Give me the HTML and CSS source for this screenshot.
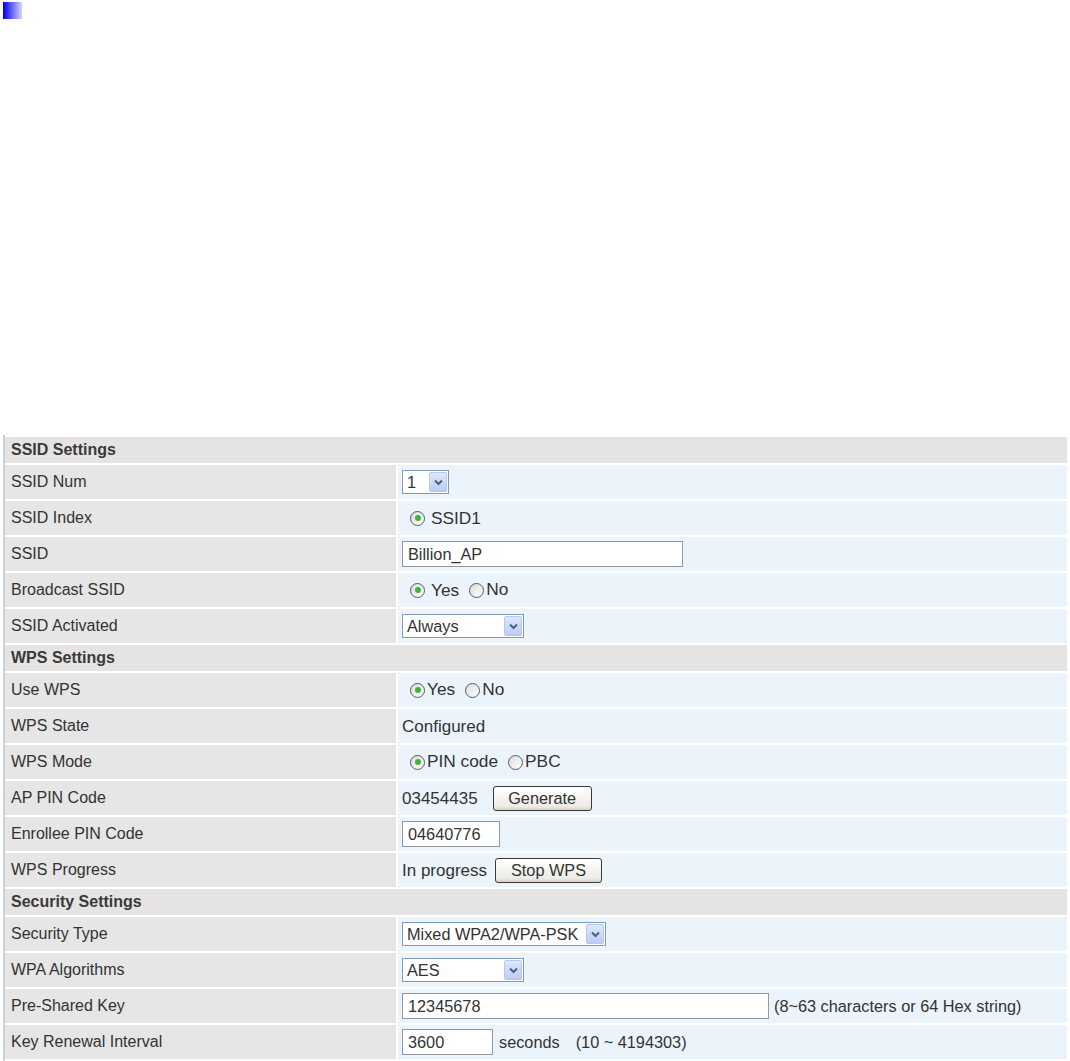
FILE: index.html
```html
<!DOCTYPE html>
<html lang="en">
<head>
    <meta charset="UTF-8">
    <title>Wireless Security</title>
    <link rel="stylesheet" href="styles.css">
</head>
<body>
    <div class="titleMark"></div>
    <div class="formWrap">
        <table class="setTable">
            <tr class="headRow"><td colspan="2">SSID Settings</td></tr>
            <tr>
                <td class="label">SSID Num</td>
                <td class="value">
                    <span class="fakeSelect selNum"><span class="selText">1</span><span class="selArrow"><svg width="9" height="7" viewBox="0 0 9 7"><path d="M1 1.5 L4.5 5 L8 1.5" fill="none" stroke="#4d6185" stroke-width="2"/></svg></span></span>
                </td>
            </tr>
            <tr>
                <td class="label">SSID Index</td>
                <td class="value"><span class="radio on"></span><span class="radioText wideGap">SSID1</span></td>
            </tr>
            <tr>
                <td class="label">SSID</td>
                <td class="value"><span class="textBox boxSsid">Billion_AP</span></td>
            </tr>
            <tr>
                <td class="label">Broadcast SSID</td>
                <td class="value"><span class="radio on"></span><span class="radioText wideGap">Yes</span><span class="radio next"></span><span class="radioText">No</span></td>
            </tr>
            <tr>
                <td class="label">SSID Activated</td>
                <td class="value">
                    <span class="fakeSelect selWide"><span class="selText">Always</span><span class="selArrow"><svg width="9" height="7" viewBox="0 0 9 7"><path d="M1 1.5 L4.5 5 L8 1.5" fill="none" stroke="#4d6185" stroke-width="2"/></svg></span></span>
                </td>
            </tr>
            <tr class="headRow"><td colspan="2">WPS Settings</td></tr>
            <tr>
                <td class="label">Use WPS</td>
                <td class="value"><span class="radio on"></span><span class="radioText">Yes</span><span class="radio next"></span><span class="radioText">No</span></td>
            </tr>
            <tr>
                <td class="label">WPS State</td>
                <td class="value"><span class="plain">Configured</span></td>
            </tr>
            <tr>
                <td class="label">WPS Mode</td>
                <td class="value"><span class="radio on"></span><span class="radioText">PIN code</span><span class="radio next"></span><span class="radioText">PBC</span></td>
            </tr>
            <tr>
                <td class="label">AP PIN Code</td>
                <td class="value"><span class="plain">03454435</span><span class="btn btnGen">Generate</span></td>
            </tr>
            <tr>
                <td class="label">Enrollee PIN Code</td>
                <td class="value"><span class="textBox boxPin">04640776</span></td>
            </tr>
            <tr>
                <td class="label">WPS Progress</td>
                <td class="value"><span class="plain">In progress</span><span class="btn btnStop">Stop WPS</span></td>
            </tr>
            <tr class="headRow"><td colspan="2">Security Settings</td></tr>
            <tr>
                <td class="label">Security Type</td>
                <td class="value">
                    <span class="fakeSelect selSec"><span class="selText">Mixed WPA2/WPA-PSK</span><span class="selArrow"><svg width="9" height="7" viewBox="0 0 9 7"><path d="M1 1.5 L4.5 5 L8 1.5" fill="none" stroke="#4d6185" stroke-width="2"/></svg></span></span>
                </td>
            </tr>
            <tr>
                <td class="label">WPA Algorithms</td>
                <td class="value">
                    <span class="fakeSelect selWide"><span class="selText">AES</span><span class="selArrow"><svg width="9" height="7" viewBox="0 0 9 7"><path d="M1 1.5 L4.5 5 L8 1.5" fill="none" stroke="#4d6185" stroke-width="2"/></svg></span></span>
                </td>
            </tr>
            <tr>
                <td class="label">Pre-Shared Key</td>
                <td class="value"><span class="textBox boxKey">12345678</span><span class="hint">(8~63 characters or 64 Hex string)</span></td>
            </tr>
            <tr>
                <td class="label">Key Renewal Interval</td>
                <td class="value"><span class="textBox boxSec">3600</span><span class="hint secText">seconds</span><span class="hint rangeText">(10 ~ 4194303)</span></td>
            </tr>
        </table>
    </div>
</body>
</html>
```

FILE: styles.css
```css
body{
    margin:0;
    font-family:"Liberation Sans", Arial, sans-serif;
    font-size:16px;
    color:#333;
    background:white;
}
.titleMark{
    width:19px;
    height:17px;
    margin:2px 0 0 3px;
    background:linear-gradient(to right, #0000f0, #d6d6ff);
}
.formWrap{
    margin-top:416px;
    margin-left:3px;
    width:1066px;
    border-left:2px solid #c9d1dc;
}
.setTable{
    width:100%;
    border-collapse:separate;
    border-spacing:2px;
    margin-left:-2px;
}
.setTable td{
    padding:0 6px;
    height:34px;
    white-space:nowrap;
}
.headRow td{
    height:26px;
    background:#e5e4e2;
    font-weight:bold;
    color:#3a3a3a;
}
.label{
    width:379px;
    background:#e6e6e6;
}
.value{
    background:#ebf3fb;
    padding-left:4px !important;
    font-size:16.3px;
}
.plain{
    font-size:17px;
    vertical-align:middle;
}
.fakeSelect{
    display:inline-flex;
    align-items:center;
    justify-content:space-between;
    box-sizing:border-box;
    height:24px;
    background:white;
    border:1px solid #7f9db9;
    vertical-align:middle;
    padding:0 1px 0 4px;
}
.selNum{ width:47px; }
.selWide{ width:122px; }
.selSec{ width:204px; }
.selArrow{
    display:inline-flex;
    align-items:center;
    justify-content:center;
    width:18px;
    height:20px;
    border-radius:2px;
    background:linear-gradient(#dfe8fd, #b9cdf7);
    border:1px solid #b5c7ee;
    box-sizing:border-box;
}
.radio{
    display:inline-block;
    box-sizing:border-box;
    width:15px;
    height:15px;
    border:1px solid #4a5c72;
    border-radius:50%;
    background:linear-gradient(135deg, #dcdcd6, #ffffff);
    vertical-align:middle;
    margin:0 2px 0 8px;
    position:relative;
}
.radio.next{
    margin-left:10px;
}
.radio.on::after{
    content:"";
    position:absolute;
    left:3.5px;
    top:3.5px;
    width:6px;
    height:6px;
    border-radius:50%;
    background:#3fb43a;
}
.radioText{
    font-size:17.3px;
    vertical-align:middle;
}
.wideGap{ margin-left:4px; }
.textBox{
    display:inline-block;
    box-sizing:border-box;
    height:26px;
    line-height:24px;
    border:1px solid #8e9aab;
    background:white;
    padding:0 5px;
    vertical-align:middle;
}
.boxSsid{ width:281px; }
.boxPin{ width:98px; }
.boxKey{ width:367px; }
.boxSec{ width:91px; }
.btn{
    display:inline-block;
    box-sizing:border-box;
    height:25px;
    line-height:23px;
    text-align:center;
    border:1px solid #3b3b3b;
    border-radius:3px;
    background:linear-gradient(#ffffff, #ecebe6 85%, #d6d0c5);
    vertical-align:middle;
}
.btnGen{ width:99px; margin-left:15px; }
.btnStop{ width:107px; margin-left:8px; }
.hint{
    vertical-align:middle;
    margin-left:5px;
}
.secText{ margin-left:6px; }
.rangeText{ margin-left:16px; }
```
